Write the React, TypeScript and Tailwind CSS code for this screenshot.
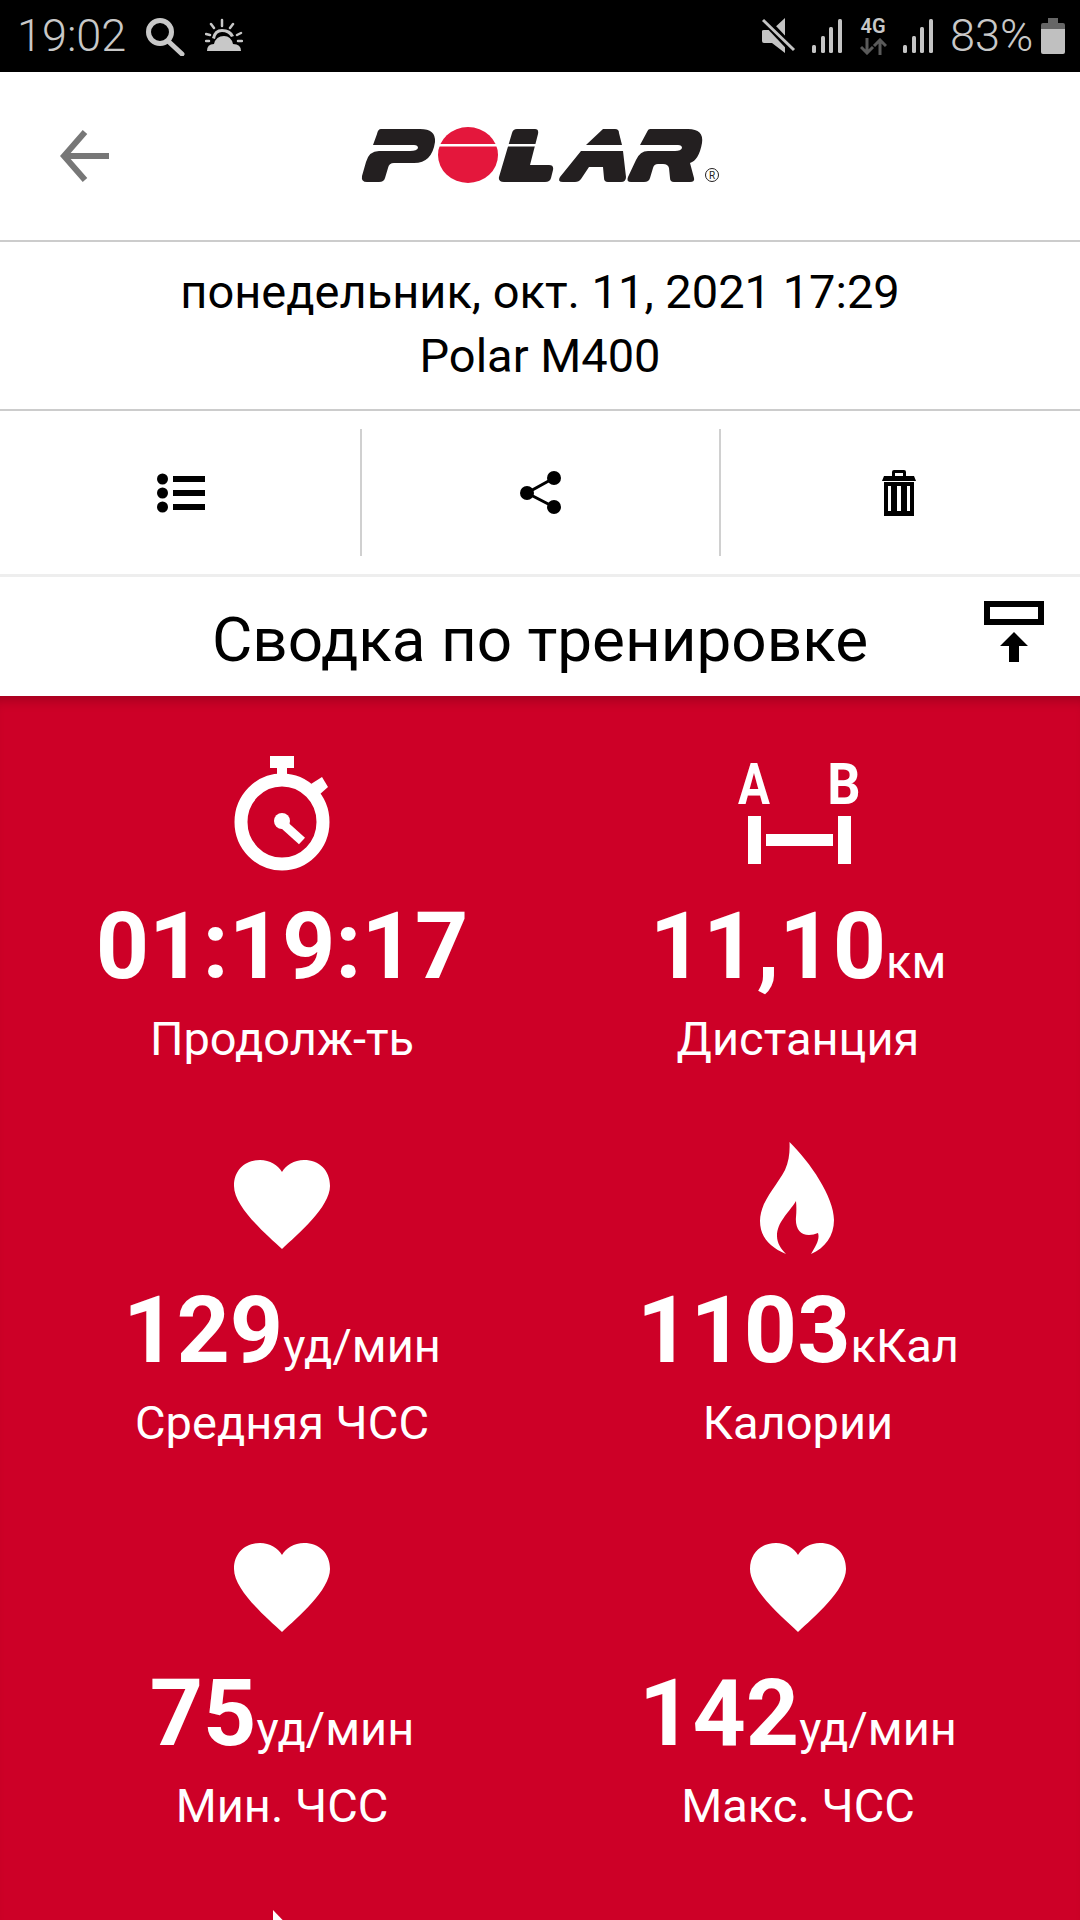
import React from "react";

const Signal = () => (
  <svg width="32" height="36" viewBox="811 19 32 36" fill="#c4c4c4">
    <rect x="812" y="46" width="4" height="8" rx="1.5" />
    <rect x="821" y="37" width="4" height="17" rx="1.5" />
    <rect x="829" y="28" width="4" height="26" rx="1.5" />
    <rect x="838" y="20" width="4" height="34" rx="1.5" />
  </svg>
);

const Heart = () => (
  <svg width="96" height="116" viewBox="0 -20 96 116" fill="#fff">
    <path d="M48 89 C32 74 0 47 0 26 C0 10 11 0 26 0 C36 0 44 5 48 12 C52 5 60 0 70 0 C85 0 96 10 96 26 C96 47 64 74 48 89Z" />
  </svg>
);

const Flame = () => (
  <svg className="mr-[2px]" width="74" height="116" viewBox="0 -2 74 116" fill="#fff">
    <path d="M29.5 0 C50 20 74 55 74 78 C74 94 65 106 51 112 C56 104 60 97 58 91 C55 92 52 93 49 93 C40 93 35 86 36 75 C36.5 70 36.5 64 36 59 C28 72 17 80 17 94 C17 101 21 107 26 112 C10 105 0 95 0 79 C0 60 16 45 25 28 C29 19 30 10 29.5 0Z" />
  </svg>
);

const Stopwatch = () => (
  <svg width="120" height="116" viewBox="222 757 120 116" fill="#fff">
    <rect x="270" y="757" width="24" height="12" />
    <rect x="277" y="768" width="10" height="10" />
    <ellipse cx="282" cy="823" rx="41" ry="42" fill="none" stroke="#fff" strokeWidth="13" />
    <path d="M311 785 L322 778 L328 788 L319 796Z" />
    <circle cx="282" cy="822" r="8" />
    <path d="M282 824 L302 842" stroke="#fff" strokeWidth="9" />
  </svg>
);

const Distance = () => (
  <svg width="136" height="132" viewBox="730 749 136 132" fill="#fff">
    <text x="754" y="805" fontSize="58" fontWeight="700" textAnchor="middle" transform="translate(754 0) scale(0.82 1) translate(-754 0)">A</text>
    <text x="844" y="805" fontSize="58" fontWeight="700" textAnchor="middle" transform="translate(844 0) scale(0.9 1) translate(-844 0)">B</text>
    <rect x="748" y="817" width="13" height="48" />
    <rect x="838" y="817" width="13" height="48" />
    <rect x="766" y="835" width="67" height="12" />
  </svg>
);

const Next = () => (
  <svg width="96" height="116" viewBox="0 0 96 116" fill="#fff">
    <path d="M39 3 L90 56 L39 108Z" />
  </svg>
);

const stats = [
  { icon: <Stopwatch />, value: "01:19:17", unit: "", label: "Продолж-ть" },
  { icon: <Distance />, value: "11,10", unit: "км", label: "Дистанция" },
  { icon: <Heart />, value: "129", unit: "уд/мин", label: "Средняя ЧСС" },
  { icon: <Flame />, value: "1103", unit: "кКал", label: "Калории" },
  { icon: <Heart />, value: "75", unit: "уд/мин", label: "Мин. ЧСС" },
  { icon: <Heart />, value: "142", unit: "уд/мин", label: "Макс. ЧСС" },
];

export default function App() {
  return (
    <div className="w-[1080px] h-[1920px] overflow-hidden flex flex-col bg-white font-[Roboto,sans-serif]">
      <div className="h-[72px] bg-black flex items-center justify-between text-[#c8c8c8] text-[45px] font-light shrink-0">
        <div className="flex items-center pl-[17px]">
          <span className="w-[124px]">19:02</span>
          <svg className="ml-[4px]" width="40" height="40" viewBox="146 15 40 40" fill="none" stroke="#c8c8c8">
            <circle cx="161" cy="31" r="11.5" strokeWidth="5" />
            <path d="M169 40 L183 53" strokeWidth="5" strokeLinecap="round" />
          </svg>
          <svg className="ml-[20px]" width="38" height="36" viewBox="205 18 38 36" fill="#c8c8c8">
            <path d="M212 38 Q214 29 222 29 Q231 29 234 36 L231 37 Q228 32 222 32 Q216 32 215 39Z" />
            <path d="M207 51 Q207 44 214 44 Q216 36 224 36 Q231 36 233 44 Q241 44 241 51Z" />
            <path d="M222 20 V26 M211 24 L214 28 M233 24 L230 28 M206 34 L210 35 M241 33 L237 35 M206 41 H209 M238 41 H242" stroke="#c8c8c8" strokeWidth="2.5" strokeLinecap="round" />
          </svg>
        </div>
        <div className="flex items-center pr-[15px]">
          <svg width="36" height="38" viewBox="761 17 36 38" fill="#c4c4c4">
            <path d="M762 31 Q762 30 764 30 H772 L785 18 V53 L772 43 H764 Q762 43 762 41Z" />
            <path d="M761 16 L795 52" stroke="#000" strokeWidth="8" />
            <path d="M763 20 L794 50" stroke="#c4c4c4" strokeWidth="3" />
          </svg>
          <div className="ml-[14px]">
            <Signal />
          </div>
          <div className="ml-[16px] w-[28px] flex flex-col items-center">
            <span className="text-[20px] leading-[18px] font-semibold">4G</span>
            <svg className="mt-[3px]" width="27" height="17" viewBox="0 0 27 17" fill="none" stroke="#5a5a5a" strokeWidth="3">
              <path d="M7 0 V14 M1 9 L7 15 L13 9" />
              <path d="M20 17 V3 M14 8 L20 2 L26 8" />
            </svg>
          </div>
          <div className="ml-[15px]">
            <Signal />
          </div>
          <span className="ml-[16px] w-[84px]">83%</span>
          <svg className="ml-[7px]" width="24" height="36" viewBox="0 0 24 36" fill="#c0c0c0">
            <path d="M7 0 H17 V5 H22 Q24 5 24 7 V11 H0 V7 Q0 5 2 5 H7Z" fill="#666" />
            <path d="M0 11 H24 V34 Q24 36 22 36 H2 Q0 36 0 34Z" />
          </svg>
        </div>
      </div>

      <div className="h-[170px] flex items-center border-b-2 border-[#cccccc] shrink-0">
        <svg className="ml-[58px]" width="54" height="56" viewBox="58 128 54 56" fill="none" stroke="#777">
          <path d="M85 132 L64 156 L85 180" strokeWidth="6" />
          <path d="M64 156 H109" strokeWidth="6" />
        </svg>
        <svg className="ml-[243px] mb-[3px]" width="380" height="70" viewBox="355 120 380 70" fill="#231f20">
          <path d="M381 129 H420 Q436 129 435 142 Q432 163 414 163 H394 Q389 163 388 168 L385 178 Q384 182 379 182 H367 Q361 182 362 176 L366 162 Q369 151 379 151 H410 Q417 151 418 148 Q418 145 414 145 H373 L377 134 Q378 129 381 129Z" />
          <ellipse cx="468" cy="155" rx="30" ry="28" fill="#e4173c" />
          <rect x="436" y="144" width="64" height="2.5" fill="#fff" />
          <path d="M517 129 H535 Q539 129 538 134 L530 165 H549 Q554 165 553 170 L551 178 Q550 182 545 182 H504 Q498 182 499 177 L512 133 Q513 129 517 129Z" />
          <rect x="505" y="144" width="32" height="2.5" fill="#fff" />
          <path d="M603 129 H615 Q619 129 619 133 L622 145 H586Z" />
          <path d="M581 151 H623 L626 177 Q626 182 621 182 H608 Q604 182 604 178 L603 167 H589 L581 179 Q579 182 575 182 H563 Q557 182 560 177Z" />
          <path d="M650 129 H688 Q704 129 702 143 Q699 160 690 163 L694 178 Q695 182 690 182 H674 Q670 182 670 178 L669 168 Q668 164 663 164 H658 Q654 164 653 168 L650 178 Q649 182 644 182 H631 Q626 182 628 177 L636 160 Q640 151 648 151 H675 Q681 151 682 148 Q682 145 678 145 H640 L647 132 Q648 129 650 129Z" />
          <circle cx="712" cy="175" r="6.5" fill="none" stroke="#231f20" strokeWidth="1" />
          <text x="712" y="179" fontSize="10" textAnchor="middle">R</text>
        </svg>
      </div>

      <div className="h-[169px] flex flex-col items-center justify-center pb-[3px] border-b-2 border-[#cccccc] text-[47px] leading-[64px] text-black shrink-0">
        <span>понедельник, окт. 11, 2021 17:29</span>
        <span>Polar M400</span>
      </div>

      <div className="h-[166px] flex items-center border-b-[3px] border-[#eeeeee] shrink-0">
        <div className="w-[362px] h-[127px] flex items-center justify-center border-r-2 border-[#d0d0d0]">
          <svg className="ml-[2px]" width="48" height="40" viewBox="157 472 48 40" fill="#000">
            <circle cx="162.5" cy="478" r="5.5" />
            <circle cx="162.5" cy="492" r="5.5" />
            <circle cx="162.5" cy="506" r="5.5" />
            <rect x="173" y="475" width="32" height="6" />
            <rect x="173" y="489" width="32" height="6" />
            <rect x="173" y="503" width="32" height="6" />
          </svg>
        </div>
        <div className="w-[359px] h-[127px] flex items-center justify-center border-r-2 border-[#d0d0d0]">
          <svg width="44" height="44" viewBox="518 471 44 44" fill="#000">
            <circle cx="553" cy="478" r="7" />
            <circle cx="526" cy="493" r="7" />
            <circle cx="553" cy="507" r="7" />
            <path d="M553 478 L526 493 L553 507" fill="none" stroke="#000" strokeWidth="3" />
          </svg>
        </div>
        <div className="flex-1 h-[127px] flex items-center justify-center">
          <svg className="mr-[3px]" width="34" height="46" viewBox="883 467 34 46" fill="#000">
            <path d="M893 473 V469 Q893 467 895 467 H905 Q907 467 907 469 V473 H904 V470 H896 V473Z" />
            <path d="M885 473 H915 L917 478 H883Z" />
            <path d="M885 479 H915 V513 H885Z M889 483 V508 H892 V483Z M898 483 V508 H902 V483Z M908 483 V508 H911 V483Z" fillRule="evenodd" />
          </svg>
        </div>
      </div>

      <div className="h-[119px] grid grid-cols-[1fr_auto_1fr] items-center shrink-0">
        <div />
        <span className="text-[62px] leading-[72px] pt-[6px] text-black">Сводка по тренировке</span>
        <svg className="justify-self-end mr-[36px] mb-[9px]" width="60" height="62" viewBox="984 601 60 62" fill="#000">
          <rect x="987" y="604" width="54" height="18" fill="none" stroke="#000" strokeWidth="6" />
          <path d="M1014 632 L1028 646 H1019 V662 H1009 V646 H1000Z" />
        </svg>
      </div>

      <div className="flex-1 bg-[#cd0027] shadow-[inset_0_12px_12px_-8px_rgba(0,0,0,0.22)] px-[24px] grid grid-cols-2 auto-rows-[383.5px] text-white">
        {stats.map((s) => (
          <div key={s.label} className="flex flex-col items-center pt-[60px]">
            <div className="h-[116px] flex items-center justify-center">{s.icon}</div>
            <div className="mt-[25px] flex items-baseline h-[100px]">
              <span className="text-[93px] leading-[100px] font-bold">{s.value}</span>
              {s.unit && <span className="text-[47px] leading-[56px]">{s.unit}</span>}
            </div>
            <span className="mt-[14px] text-[47px] leading-[56px]">{s.label}</span>
          </div>
        ))}
        <div className="flex flex-col items-center pt-[60px]">
          <Next />
        </div>
      </div>
    </div>
  );
}
